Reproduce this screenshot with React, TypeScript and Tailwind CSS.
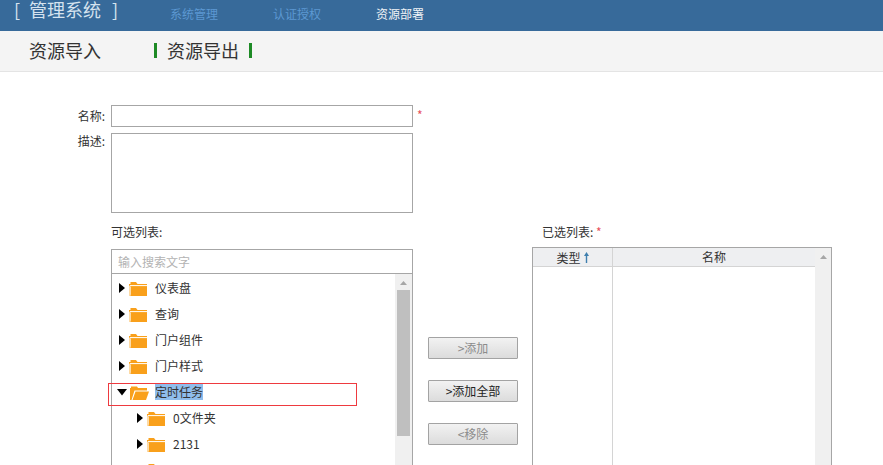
const font = { fontFamily: '"Noto Sans CJK SC", "Liberation Sans", sans-serif' };

function Folder({ open = false }: { open?: boolean }) {
  return (
    <svg width="19" height="15" viewBox="0 0 19 15" className="shrink-0">
      {open ? (
        <>
          <path d="M0 15V3h1V1.5h6L8 3h9v2.5H4.5L1.5 15Z" fill="#f9a01b" />
          <path d="M5.5 6.5H19L16 15H2.5Z" fill="#f9a01b" />
        </>
      ) : (
        <>
          <path d="M0 15V3h1.5V1h5.5l1.5 2H18v3H1.2v7.8H18V15Z" fill="#f9a01b" />
          <path d="M1.5 5.5H18V15H1.5Z" fill="#f9a01b" />
          <path d="M1 4.6H18" stroke="#fff" strokeWidth="1" />
          <path d="M.9 4.6V15" stroke="#fff" strokeWidth="1" />
        </>
      )}
    </svg>
  );
}

function Caret({ open = false }: { open?: boolean }) {
  return open ? (
    <svg width="10" height="7" viewBox="0 0 10 7" className="shrink-0"><path d="M0 0h10L5 6.5Z" fill="#000" /></svg>
  ) : (
    <svg width="6" height="10" viewBox="0 0 6 10" className="shrink-0"><path d="M0 0l6 5-6 5Z" fill="#000" /></svg>
  );
}

function TreeRow({ label, indent = false, open = false, selected = false }: { label: string; indent?: boolean; open?: boolean; selected?: boolean }) {
  return (
    <div className={`flex h-[26px] items-center ${indent ? "pl-[25px]" : open ? "pl-[5px]" : "pl-[7px]"}`}>
      <Caret open={open} />
      <span className={open ? "ml-[3px]" : "ml-[4px]"}><Folder open={open} /></span>
      <span className={`${open ? "ml-[6px]" : "ml-[7px]"} h-[16px] text-[12px] leading-[16px] text-[#333] ${selected ? "bg-[#8fbdec]" : ""}`}>{label}</span>
    </div>
  );
}

function ActionButton({ label, active = false }: { label: string; active?: boolean }) {
  return (
    <button className={`flex h-[22px] w-[90px] items-center justify-center rounded-[1px] border border-[#a3a3a3] bg-gradient-to-b from-[#f2f2f2] to-[#dcdcdc] text-[12px] ${active ? "text-[#222]" : "text-[#8b8b8b]"}`}>
      {label}
    </button>
  );
}

export default function App() {
  return (
    <div style={font} className="relative h-[465px] w-[883px] overflow-hidden bg-white">
      <header className="flex h-[31px] bg-[#376a9a]">
        <div className="flex w-[170px] items-start pl-[14px] text-[18px] leading-[19px] text-[#d5e3ef]">
          <span className="w-[15px]">[</span>
          <span>管理系统</span>
          <span className="ml-[11px]">]</span>
        </div>
        <nav className="flex pt-[6px] text-[12px] leading-[16px]">
          <span className="w-[103px] text-[#5c98d2]">系统管理</span>
          <span className="w-[103px] text-[#5c98d2]">认证授权</span>
          <span className="text-[#f0f3f6]">资源部署</span>
        </nav>
      </header>

      <div className="flex h-[41px] items-center border-b border-[#e4e4e4] bg-[#f4f4f4] pb-[1px] text-[18px] text-[#333]">
        <span className="ml-[29px] w-[125px]">资源导入</span>
        <i className="h-[15px] w-[3px] bg-[#1d8a25]" />
        <span className="ml-[10px] w-[72px]">资源导出</span>
        <i className="ml-[10px] h-[15px] w-[3px] bg-[#1d8a25]" />
      </div>

      <form className="pt-[33px]">
        <div className="flex h-[22px]">
          <label className="w-[105px] pt-[3px] text-right text-[12px] leading-[16px] text-[#333]">名称:</label>
          <div className="ml-[6px] h-[22px] w-[302px] border border-[#a6a6a6] bg-white" />
          <span className="ml-[4px] text-[12px] leading-[20px] text-[#e8505b]">*</span>
        </div>
        <div className="mt-[6px] flex h-[80px]">
          <label className="w-[105px] text-right text-[12px] leading-[16px] text-[#333]">描述:</label>
          <div className="ml-[6px] h-[80px] w-[302px] border border-[#a6a6a6] bg-white" />
        </div>

        <div className="mt-[11px] flex pl-[111px]">
          <section className="w-[302px]">
            <div className="h-[25px] text-[12px] leading-[16px] text-[#333]">可选列表:</div>
            <div className="h-[300px] border border-[#a6a6a6]">
              <div className="h-[24px] border-b border-[#a6a6a6] pl-[6px] text-[12px] leading-[24px] text-[#b3b3b3]">输入搜索文字</div>
              <div className="flex h-[275px]">
                <div className="flex-1 pt-[1px]">
                  <TreeRow label="仪表盘" />
                  <TreeRow label="查询" />
                  <TreeRow label="门户组件" />
                  <TreeRow label="门户样式" />
                  <TreeRow label="定时任务" open selected />
                  <TreeRow label="0文件夹" indent />
                  <TreeRow label="2131" indent />
                  <TreeRow label="" indent />
                </div>
                <div className="flex h-full w-[17px] flex-col items-center bg-[#f0f0f0] pt-[7px]">
                  <svg width="7" height="4" viewBox="0 0 7 4" className="shrink-0"><path d="M3.5 0L7 4H0Z" fill="#a6a6a6" /></svg>
                  <div className="mt-[5px] h-[146px] w-[13px] bg-[#bfbfbf]" />
                </div>
              </div>
            </div>
          </section>

          <section className="ml-[15px] flex w-[90px] flex-col gap-[21px] pt-[113px]">
            <ActionButton label=">添加" />
            <ActionButton label=">添加全部" active />
            <ActionButton label="<移除" />
          </section>

          <section className="ml-[14px] w-[300px]">
            <div className="h-[23px] pl-[10px] text-[12px] leading-[16px] text-[#333]">
              已选列表: <span className="text-[#e8505b]">*</span>
            </div>
            <div className="flex h-[300px] border border-[#a6a6a6]">
              <div className="flex flex-1 flex-col">
                <div className="flex h-[19px] border-b border-[#d4d4d4] bg-[#eeeff1] text-[12px] leading-[17px] text-[#333]">
                  <div className="flex w-[80px] items-center justify-center gap-[3px] border-r border-[#d4d4d4]">
                    类型
                    <svg width="5" height="11" viewBox="0 0 5 11"><path d="M2.5 0L5 4H3.2v7H1.8V4H0Z" fill="#3f7fae" /></svg>
                  </div>
                  <div className="flex-1 text-center">名称</div>
                </div>
                <div className="flex flex-1">
                  <div className="w-[80px] border-r border-[#d4d4d4]" />
                </div>
              </div>
              <div className="flex w-[16px] justify-center bg-[#f0f0f0] pt-[7px]">
                <svg width="7" height="4" viewBox="0 0 7 4"><path d="M3.5 0L7 4H0Z" fill="#a6a6a6" /></svg>
              </div>
            </div>
          </section>
        </div>
      </form>

      <div className="absolute left-[108px] top-[383px] h-[23px] w-[249px] border border-[#ee3a3f]" />
    </div>
  );
}
